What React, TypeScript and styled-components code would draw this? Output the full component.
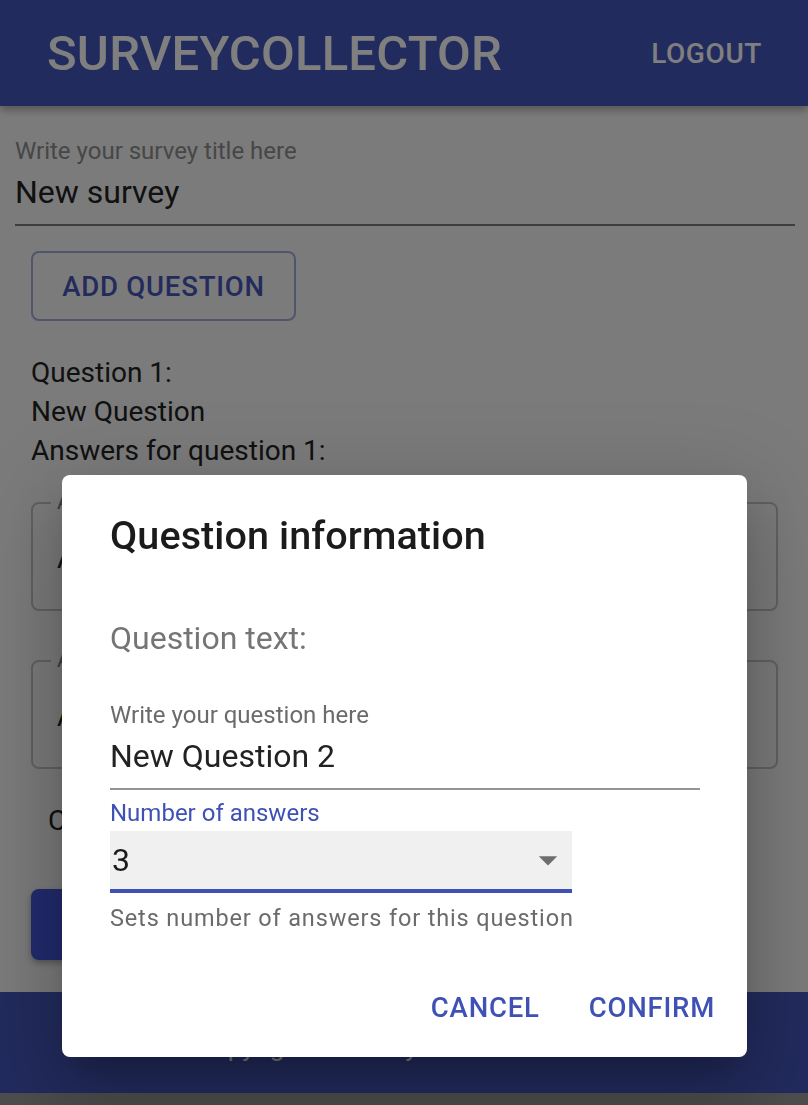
import React from "react";
import styled, { createGlobalStyle } from "styled-components";

const GlobalStyle = createGlobalStyle`
  html, body {
    margin: 0;
    padding: 0;
    background: #9a9a9a;
  }
  body {
    font-family: Roboto, "Noto Sans", Arial, sans-serif;
    -webkit-font-smoothing: antialiased;
  }
  * { box-sizing: border-box; }
`;

const Page = styled.div`
  width: 808px;
  height: 1105px;
  display: flex;
  flex-direction: column;
  background: #f6f6f6;
  overflow: hidden;
`;

const Header = styled.header`
  height: 106px;
  flex: none;
  background: #4456bc;
  display: flex;
  align-items: center;
  justify-content: space-between;
  padding: 0 46px 0 47px;
  box-shadow: 0 4px 8px rgba(0, 0, 0, 0.3);
`;

const Brand = styled.h1`
  margin: 0;
  font-size: 49px;
  font-weight: 500;
  letter-spacing: 0.2px;
  color: #ffffff;
`;

const HeaderButton = styled.button`
  border: none;
  background: none;
  padding: 0;
  font: inherit;
  font-size: 28px;
  font-weight: 500;
  letter-spacing: 0.6px;
  color: #ffffff;
`;

const Main = styled.main`
  flex: none;
  padding: 31px 13px 0 15px;
  display: flex;
  flex-direction: column;
`;

const SmallLabel = styled.label<{ $color?: string }>`
  display: block;
  font-size: 24px;
  line-height: 28px;
  color: ${(p) => p.$color ?? "#8e8e8e"};
`;

const LineInput = styled.div<{ $line: string }>`
  font-size: 32px;
  line-height: 50px;
  color: #222;
  padding: 2px 0 7px;
  border-bottom: 2px solid ${(p) => p.$line};
`;

const Section = styled.section`
  padding-left: 16px;
  display: flex;
  flex-direction: column;
`;

const OutlinedButton = styled.button`
  align-self: flex-start;
  margin-top: 25px;
  width: 265px;
  height: 70px;
  border: 2px solid #a3abd8;
  border-radius: 8px;
  background: transparent;
  font: inherit;
  font-size: 27.5px;
  font-weight: 500;
  letter-spacing: 0.8px;
  color: #4657bb;
`;

const BodyLines = styled.div`
  margin-top: 32px;
  font-size: 28px;
  line-height: 39px;
  color: #222;
`;

const AnswerBox = styled.div<{ $gap: number }>`
  position: relative;
  margin-top: ${(p) => p.$gap}px;
  width: 747px;
  height: 109px;
  border: 2px solid #c2c2c2;
  border-radius: 8px;
  padding: 38px 24px 0;
  font-size: 28px;
  color: #222;
`;

const Notch = styled.span`
  position: absolute;
  top: -14px;
  left: 18px;
  padding: 0 6px;
  background: #f6f6f6;
  font-size: 21px;
  line-height: 24px;
  color: #777;
`;

const CorrectLine = styled.div`
  margin-top: 32px;
  padding-left: 17px;
  font-size: 28px;
  line-height: 39px;
  color: #222;
`;

const SaveButton = styled.button`
  align-self: flex-start;
  margin-top: 49px;
  width: 300px;
  height: 71px;
  border: none;
  border-radius: 8px;
  background: #4456dc;
  font: inherit;
  font-size: 27.5px;
  font-weight: 500;
  color: #fff;
  box-shadow: 0 3px 6px rgba(0, 0, 0, 0.3);
`;

const Footer = styled.footer`
  margin-top: 32px;
  height: 101px;
  flex: none;
  background: #4456bc;
  padding: 40px 0 0 196px;
`;

const FooterText = styled.span`
  display: block;
  font-size: 26px;
  line-height: 30px;
  color: #fff;
`;

const BottomStrip = styled.div`
  flex: 1;
  background: #9a9a9a;
`;

const Backdrop = styled.div`
  position: fixed;
  inset: 0;
  z-index: 10;
  background: rgba(0, 0, 0, 0.5);
`;

const Dialog = styled.div`
  position: absolute;
  z-index: 11;
  left: 62px;
  top: 475px;
  width: 685px;
  height: 582px;
  background: #fff;
  border-radius: 8px;
  box-shadow: 0 20px 28px -13px rgba(0, 0, 0, 0.2),
    0 44px 70px 6px rgba(0, 0, 0, 0.14), 0 17px 85px 15px rgba(0, 0, 0, 0.12);
  display: flex;
  flex-direction: column;
  padding: 0 32px 0 48px;
`;

const DialogTitle = styled.h2`
  margin: 33px 0 0;
  font-size: 39.5px;
  line-height: 56px;
  font-weight: 500;
  letter-spacing: 0.1px;
  color: #1b1b1b;
`;

const SubHeading = styled.div`
  margin-top: 54px;
  font-size: 32px;
  line-height: 40px;
  color: #757575;
`;

const QuestionField = styled.div`
  margin-top: 43px;
  width: 590px;
`;

const SelectField = styled.div`
  margin-top: 9px;
  width: 462px;
`;

const SelectBox = styled.div`
  margin-top: 4px;
  height: 62px;
  background: #f0f0f0;
  border-bottom: 4px solid #3f51b5;
  display: flex;
  align-items: center;
  justify-content: space-between;
  padding: 0 2px 0 2px;
  font-size: 32px;
  color: #1a1a1a;
`;

const HelperText = styled.div`
  margin-top: 11px;
  font-size: 23.5px;
  line-height: 28px;
  letter-spacing: 0.85px;
  color: #6b6b6b;
  white-space: nowrap;
`;

const Actions = styled.div`
  margin-top: auto;
  margin-bottom: 27px;
  display: flex;
  justify-content: flex-end;
  gap: 49px;
`;

const TextButton = styled.button`
  border: none;
  background: none;
  padding: 0;
  font: inherit;
  font-size: 27.5px;
  line-height: 44px;
  font-weight: 500;
  letter-spacing: 0.8px;
  color: #3f51b5;
`;

const ArrowIcon = () => (
  <svg width="44" height="44" viewBox="0 0 24 24" aria-hidden>
    <path d="M7 10l5 5 5-5z" fill="#6e6e6e" />
  </svg>
);

export default function App() {
  return (
    <>
      <GlobalStyle />
      <Page>
        <Header>
          <Brand>SURVEYCOLLECTOR</Brand>
          <HeaderButton>LOGOUT</HeaderButton>
        </Header>
        <Main>
          <SmallLabel>Write your survey title here</SmallLabel>
          <LineInput $line="#7a7a7a">New survey</LineInput>
          <Section>
            <OutlinedButton>ADD QUESTION</OutlinedButton>
            <BodyLines>
              <div>Question 1:</div>
              <div>New Question</div>
              <div>Answers for question 1:</div>
            </BodyLines>
            <AnswerBox $gap={32}>
              <Notch>Answer 1</Notch>
              Answer 1
            </AnswerBox>
            <AnswerBox $gap={49}>
              <Notch>Answer 2</Notch>
              Answer 2
            </AnswerBox>
            <CorrectLine>Correct answer: 1</CorrectLine>
            <SaveButton>SAVE SURVEY</SaveButton>
          </Section>
        </Main>
        <Footer>
          <FooterText>Copyright © SurveyCollector 2021</FooterText>
        </Footer>
        <BottomStrip />
      </Page>
      <Backdrop />
      <Dialog role="dialog">
        <DialogTitle>Question information</DialogTitle>
        <SubHeading>Question text:</SubHeading>
        <QuestionField>
          <SmallLabel $color="#6b6b6b">Write your question here</SmallLabel>
          <LineInput $line="#949494">New Question 2</LineInput>
        </QuestionField>
        <SelectField>
          <SmallLabel $color="#3f51b5">Number of answers</SmallLabel>
          <SelectBox>
            <span>3</span>
            <ArrowIcon />
          </SelectBox>
          <HelperText>Sets number of answers for this question</HelperText>
        </SelectField>
        <Actions>
          <TextButton>CANCEL</TextButton>
          <TextButton>CONFIRM</TextButton>
        </Actions>
      </Dialog>
    </>
  );
}
